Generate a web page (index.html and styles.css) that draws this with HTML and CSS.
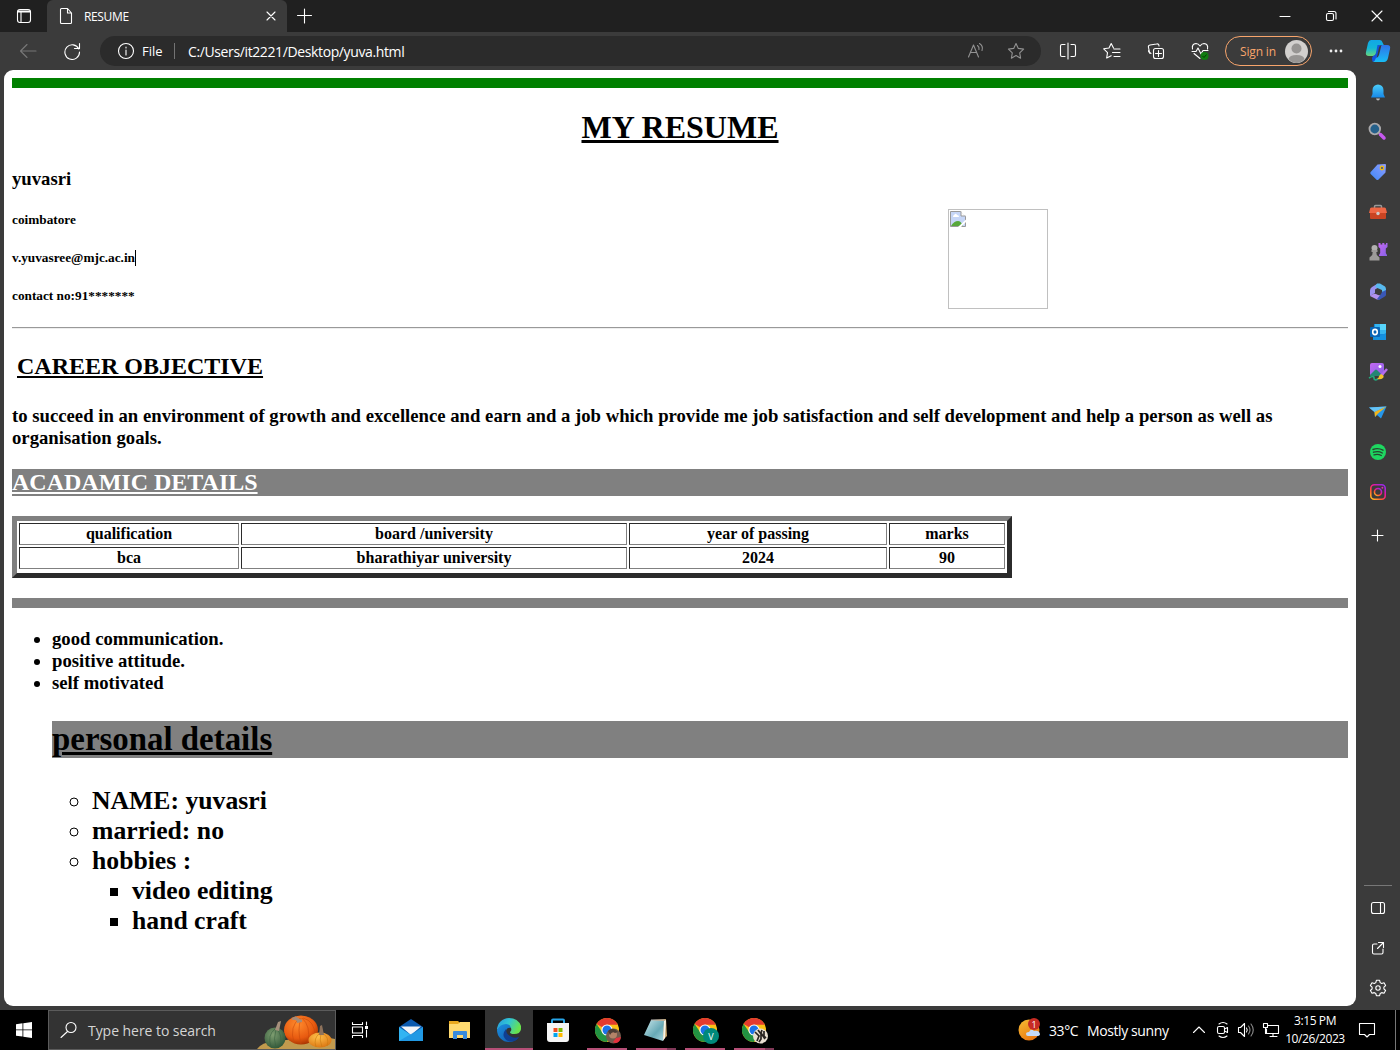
FILE: index.html
```html
<!DOCTYPE html>
<html lang="en">
<head>
<meta charset="utf-8">
<title>RESUME</title>
<link rel="stylesheet" href="styles.css">
</head>
<body>
<svg class="defs" width="0" height="0" aria-hidden="true">
  <defs>
    <linearGradient id="blue" x1="0" y1="0" x2="0" y2="1"><stop offset="0" stop-color="#4bcdf8"/><stop offset="1" stop-color="#1688e8"/></linearGradient>
    <linearGradient id="teal" x1="0" y1="0" x2="0" y2="1"><stop offset="0" stop-color="#12a6e6"/><stop offset=".5" stop-color="#12b5d8"/><stop offset="1" stop-color="#68d67c"/></linearGradient>
    <linearGradient id="sky" x1="0" y1="0" x2="0" y2="1"><stop offset="0" stop-color="#2f72e8"/><stop offset="1" stop-color="#18bdf5"/></linearGradient>
    <linearGradient id="tag" x1="0" y1="1" x2="1" y2="0"><stop offset="0" stop-color="#3f87f5"/><stop offset="1" stop-color="#8e9dff"/></linearGradient>
    <linearGradient id="purple" x1="0" y1="0" x2="1" y2="1"><stop offset="0" stop-color="#c568f2"/><stop offset="1" stop-color="#8561e6"/></linearGradient>
    <linearGradient id="insta" x1="0" y1="1" x2=".8" y2="0"><stop offset="0" stop-color="#ffca20"/><stop offset=".35" stop-color="#ff5a30"/><stop offset=".65" stop-color="#ee1694"/><stop offset="1" stop-color="#9929e8"/></linearGradient>
    <linearGradient id="edgeTop" x1="0" y1="0" x2="1" y2=".4"><stop offset="0" stop-color="#2795dd"/><stop offset=".5" stop-color="#31c5d4"/><stop offset="1" stop-color="#67e34e"/></linearGradient>
    <linearGradient id="edgeLow" x1="0" y1="0" x2="1" y2="1"><stop offset="0" stop-color="#1b8fe0"/><stop offset="1" stop-color="#1055a5"/></linearGradient>
    <radialGradient id="pumpkin" cx=".4" cy=".3" r=".75"><stop offset="0" stop-color="#ff8b2d"/><stop offset=".65" stop-color="#e85a10"/><stop offset="1" stop-color="#9f3000"/></radialGradient>
    <radialGradient id="gourd" cx=".4" cy=".35" r=".7"><stop offset="0" stop-color="#7d9d70"/><stop offset="1" stop-color="#2e5436"/></radialGradient>
    <radialGradient id="squash" cx=".4" cy=".3" r=".75"><stop offset="0" stop-color="#ffc04b"/><stop offset="1" stop-color="#db7411"/></radialGradient>
    <linearGradient id="sun" x1="0" y1="0" x2=".6" y2="1"><stop offset="0" stop-color="#f7bd33"/><stop offset="1" stop-color="#e97812"/></linearGradient>
    <linearGradient id="glass" x1="0" y1="0" x2="1" y2="1"><stop offset="0" stop-color="#c8e6ea"/><stop offset=".6" stop-color="#67a9b6"/><stop offset="1" stop-color="#a9d6de"/></linearGradient>
    <symbol id="chrome" viewBox="0 0 24 24">
      <circle cx="12" cy="12" r="12" fill="#fbc116"/>
      <path d="M12 12 1.600 6A12 12 0 0 1 22.400 6L22.800 6.800H12z" fill="#e33b2e"/>
      <path d="M1.600 6A12 12 0 0 0 12 24L16.600 14.600 12 12 7.400 14.600z" fill="#229342"/>
      <circle cx="12" cy="12" r="5.600" fill="#fff"/><circle cx="12" cy="12" r="4.500" fill="#1a73e8"/>
    </symbol>
  </defs>
</svg>
<div class="desktop">
  <div class="browser">
    <header class="tabs">
      <div class="workspace"><svg width="16" height="16" viewBox="0 0 16 16" class="line"><rect x="1.500" y="1.500" width="13" height="13" rx="2.500"/><path d="M1.500 4h13M2 3h12M5 4v10.500" /></svg></div>
      <div class="tab">
        <svg width="14" height="18" viewBox="0 0 14 18" class="line"><path d="M3 1.500h5.500L12.500 6v9.500q0 1-1 1H2.500q-1 0-1-1v-13q0-1 1-1zM8.500 1.500V6h4"/></svg>
        <span class="tab-title">RESUME</span>
        <svg width="10" height="10" viewBox="0 0 10 10" class="line"><path d="m1 1 8 8M9 1 1 9"/></svg>
      </div>
      <div class="newtab"><svg width="16" height="16" viewBox="0 0 16 16" class="line"><path d="M8.500 1v14M1.500 7.500h14"/></svg></div>
      <div class="controls">
        <svg width="46" height="32" viewBox="0 0 46 32" class="line"><path d="M18 16.500h10"/></svg>
        <svg width="46" height="32" viewBox="0 0 46 32" class="line"><rect x="18.500" y="13.500" width="7" height="7" rx="1.500"/><path d="M20.500 11.500H26q2 0 2 2V19"/></svg>
        <svg width="46" height="32" viewBox="0 0 46 32" class="line"><path d="m18 11 10 10M28 11 18 21"/></svg>
      </div>
    </header>
    <div class="toolbar">
      <svg class="back line" width="18" height="16" viewBox="0 0 18 16"><path d="M17 8H1.500M8 1.500 1.500 8 8 14.500"/></svg>
      <svg class="reload line" width="18" height="18" viewBox="0 0 18 18"><path d="M15.800 7A7.300 7.300 0 1 0 16.500 10M16.500 1.500v5h-5"/></svg>
      <div class="address">
        <svg width="18" height="18" viewBox="0 0 18 18" class="line"><circle cx="9" cy="9" r="7.500"/><path d="M9 8v5M9 5v1"/></svg>
        <span class="scheme">File</span><span class="sep"></span><span class="url">C:/Users/it2221/Desktop/yuva.html</span>
        <svg class="read line" width="18" height="18" viewBox="0 0 18 18"><path d="M1.500 15 6.500 3l5 12M3.500 10.500h6M10.500 3.500q2 1.500 1.500 4M12.500 1.500q4 2.500 2.500 7"/></svg>
        <svg class="star line" width="18" height="18" viewBox="0 0 18 18"><path d="m9 1.500 2.300 4.900 5.300.7-3.900 3.700.9 5.400L9 13.600l-4.600 2.600.9-5.400L1.400 7.100l5.300-.7z"/></svg>
      </div>
      <div class="actions">
        <svg width="44" height="18" viewBox="0 0 44 18" class="line"><path d="M19 2.500h-3q-1.500 0-1.500 1.500v9q0 1.500 1.500 1.500h3M25 2.500h3q1.500 0 1.500 1.500v9q0 1.500-1.500 1.500h-3M22 1v16"/></svg>
        <svg width="44" height="18" viewBox="0 0 44 18" class="line"><path d="m23.500 6-2.300-4.500L19 6l-5.300.8 3.800 3.800-.8 5.400 4.500-2.300M24 7h6M22.500 10.500H30M24 14.500h6"/></svg>
        <svg width="44" height="18" viewBox="0 0 44 18" class="line"><rect x="19.500" y="6.500" width="10" height="10" rx="2"/><path d="M24.500 8.500v6M21.500 11.500h6M17 11.500 15 10q-1-1 0-1.700M25 4q0-2.500-2.500-2L16 3q-2 .5-1.500 2.500l1.200 5.800"/></svg>
        <svg width="44" height="18" viewBox="0 0 44 18"><path class="line" d="M14.500 7Q13.500 2 18 1.500q2.300 0 4 2.500 1.700-2.500 4-2.500Q30.500 2 29.500 7M14 9.500h4l2-3.500 3 6 2-3.500h5M16 11.500l6 5"/><circle cx="26.500" cy="14" r="4" fill="#107c10"/><path d="m24.500 14 1.500 1.500 2.500-3" fill="none" stroke="#063d06"/></svg>
      </div>
      <div class="signin"><span>Sign in</span><svg width="23" height="23" viewBox="0 0 23 23"><circle cx="11.500" cy="11.500" r="11.500" fill="#d2d0ce"/><circle cx="11.500" cy="8.500" r="5" fill="#979593"/><path d="M3.500 19q1-4 8-4t8 4q-3.500 4-8 4t-8-4" fill="#979593"/></svg></div>
      <svg class="dots" width="16" height="4" viewBox="0 0 16 4"><g fill="#eee"><circle cx="3" cy="2" r="1.400"/><circle cx="8" cy="2" r="1.400"/><circle cx="13" cy="2" r="1.400"/></g></svg>
      <svg class="copilot" width="26" height="24" viewBox="0 0 26 24"><path d="M6 1h9q2 0 2.800 3l1 2h-3q-2 0-2.700 2l-2 7q-.7 2-3 2H4Q0 17 1 13L3 4q1-3 3-3" fill="url(#teal)"/><path d="M12.500 6h5q-3 0-3.600 3L12 18q-1 4-4 5-1-1-1-4l1-2q2 0 3-3z" fill="#1354dc"/><path d="M17 6h5q4 0 3 4l-2 9q-1 4-4 4H8q2-1 3-4 2 0 3-3l2-8q0-2 1-2" fill="url(#sky)"/></svg>
    </div>
    <div class="content">
      <main class="page">
        <div class="green-bar"></div>
        <h1 class="title">MY RESUME</h1>
        <h3 class="name">yuvasri</h3>
        <div class="contact">
          <div class="contact-lines">
            <h5>coimbatore</h5>
            <h5 class="email">v.yuvasree@mjc.ac.in<i class="caret"></i></h5>
            <h5>contact no:91*******</h5>
          </div>
          <div class="photo"><svg width="16" height="16" viewBox="0 0 16 16"><path d="M.5.500h10l5 5v10H.500z" fill="#c6d6f7" stroke="#999"/><path d="M3 6h6q0-2-2-2-1-2-2.500-.5Q3 4 3 6" fill="#fff"/><path d="M1 15q3-5 7-5 3 0 5 5z" fill="#58a83b"/><path d="M11 .5v4.500h4.500" fill="#fff" stroke="#999"/><path d="m8 16 8-7.500V11l-5 5z" fill="#fff"/></svg></div>
        </div>
        <hr class="rule">
        <h2 class="objective-title">CAREER OBJECTIVE</h2>
        <p class="objective">to succeed in an environment of growth and excellence and earn and a job which provide me job satisfaction and self development and help a person as well as organisation goals.</p>
        <h2 class="academic-title">ACADAMIC DETAILS</h2>
        <div class="table-frame">
          <table>
            <colgroup><col class="c1"><col class="c2"><col class="c3"><col class="c4"></colgroup>
            <tr><th>qualification</th><th>board /university</th><th>year of passing</th><th>marks</th></tr>
            <tr><th>bca</th><th>bharathiyar university</th><th>2024</th><th>90</th></tr>
          </table>
        </div>
        <div class="gray-bar"></div>
        <ul class="skills"><li>good communication.</li><li>positive attitude.</li><li>self motivated</li></ul>
        <section class="personal">
          <h1>personal details</h1>
          <ul class="facts">
            <li>NAME: yuvasri</li><li>married: no</li>
            <li>hobbies :<ul><li>video editing</li><li>hand craft</li></ul></li>
          </ul>
        </section>
      </main>
      <aside class="sidebar">
        <div class="slot"><svg width="20" height="20" viewBox="0 0 20 20"><path d="M3 15.500 4.500 12V8a5.500 5.500 0 0 1 11 0v4l1.500 3.500z" fill="url(#blue)"/><path d="M8 16.500h4q-.5 2-2 2t-2-2" fill="#bbb"/></svg></div>
        <div class="slot"><svg width="20" height="20" viewBox="0 0 20 20"><path d="m11 11 2 2" stroke="#aaa" stroke-width="2"/><path d="m12.500 12.500 3.500 3.500" stroke="#c658ef" stroke-width="3.500" stroke-linecap="round"/><circle cx="6.800" cy="7" r="5.300" fill="#25608a" stroke="#aaa9ab" stroke-width="1.800"/></svg></div>
        <div class="slot"><svg width="20" height="20" viewBox="0 0 20 20"><path d="M9.500 2.500 17 2q1 0 1 1l-.5 7.500-7 7q-1 1-2.200 0l-5.600-5.500q-1-1 0-2z" fill="url(#tag)"/><circle cx="14" cy="6" r="1.700" fill="#334b8f" stroke="#e9b91b" stroke-width="1.400"/></svg></div>
        <div class="slot"><svg width="20" height="20" viewBox="0 0 20 20"><path d="M6.500 6V4.500q0-1 1-1h5q1 0 1 1V6" fill="none" stroke="#999" stroke-width="1.500"/><path d="M2 7q0-1.500 1.500-1.500h13Q18 5.500 18 7l1 4H1z" fill="#ee6745"/><path d="M2 11h16v5q0 1-1 1H3q-1 0-1-1z" fill="#c94423"/><circle cx="10" cy="11.500" r="1.700" fill="#ccc"/></svg></div>
        <div class="slot"><svg width="20" height="20" viewBox="0 0 20 20"><path d="M10.500 1h2v1.500h1.800V1h2v1.500H18V1h1.500v4L17.800 6.500V11l1.200 2v1h-8v-1l1.200-2V6.500L10.500 5z" fill="url(#purple)"/><circle cx="6.500" cy="6" r="3" fill="#b1b0ae"/><path d="M3.500 8h6v2H8.300l.5 3 2.700 2.500V18.500h-10v-3L4.200 13l.5-3H3.500z" fill="#9d9c9a"/></svg></div>
        <div class="slot"><svg width="20" height="20" viewBox="0 0 20 20"><path d="M9 2 4 5Q2 6 2 8.500V14l5-3V7.500L13 4z" fill="#9b91ef"/><path d="M9 1.500h3L17 4.500q1 1 1 3V13l-4-3.500V8L7 5z" fill="#58b9ee"/><path d="M2 14q4-3 6-2l2 1 6 1-5 3.500H9z" fill="#b391ee"/><path d="M18 8v5q0 1-2 2l-5 3-2-1 4-5 1-2z" fill="#3957b5"/></svg></div>
        <div class="slot"><svg width="20" height="20" viewBox="0 0 20 20"><path d="M6 2h12v15H5z" fill="#1688da"/><path d="M7 2h5v6H7zM12 8h6v4h-6z" fill="#36b5ef"/><path d="M12 2h6v6h-6z" fill="#57d5fb"/><path d="m5 11 7 3 6-3v7H5z" fill="#1490df"/><rect x="2" y="5" width="10" height="10" rx="1" fill="#0765b6"/><ellipse cx="7" cy="10" rx="2.300" ry="2.600" fill="none" stroke="#fff" stroke-width="1.600"/></svg></div>
        <div class="slot"><svg width="20" height="20" viewBox="0 0 20 20"><rect x="2" y="1" width="14" height="13" rx="2" fill="url(#purple)"/><circle cx="12" cy="4.500" r="1.500" fill="#fff"/><path d="m2 13 5-5q1-1 2 0l6 6H2z" fill="#248673"/><path d="M1 16q5-3 5 0t4 1" fill="none" stroke="#25a67b" stroke-width="1.700"/><path d="m13 14 6-7" stroke="#b76bed" stroke-width="2.500"/><path d="M13 12q4 2 2 4-2 2-6 1 2-1 2-3z" fill="#f2c32c"/></svg></div>
        <div class="slot"><svg width="20" height="20" viewBox="0 0 20 20"><path d="m1 5.500 17.500-1L13 16.500 9 13l-2 2-.5-5z" fill="#2596ea"/><path d="m1 5.500 17.500-1L6.500 10z" fill="#65c3f6"/><path d="M18.500 4.500 6.500 10 7 15l2.500-3z" fill="#f2b51b"/></svg></div>
        <div class="slot"><svg width="20" height="20" viewBox="0 0 20 20"><circle cx="10" cy="10" r="8" fill="#1ed760"/><path d="M5 7.500q5-2 10 .7M5.500 10.200q5-1.500 8.800.8M6 12.900q4-1.200 7.300.6" fill="none" stroke="#264530" stroke-width="1.400" stroke-linecap="round"/></svg></div>
        <div class="slot"><svg width="20" height="20" viewBox="0 0 20 20"><g fill="none" stroke="url(#insta)" stroke-width="1.600"><rect x="2.800" y="2.800" width="14.400" height="14.400" rx="3.500"/><circle cx="10" cy="10" r="3.500"/></g><circle cx="14.400" cy="5.700" r="1" fill="#e527b0"/></svg></div>
        <div class="slot add"><svg width="16" height="16" viewBox="0 0 16 16" class="line"><path d="M7.500 2v11M2 7.500h11"/></svg></div>
        <div class="side-bottom">
          <div class="slot"><svg width="16" height="16" viewBox="0 0 16 16" class="line"><rect x="1.500" y="2.500" width="13" height="11" rx="2"/><path d="M10.500 2.500v11"/></svg></div>
          <div class="slot"><svg width="16" height="16" viewBox="0 0 16 16" class="line"><path d="M7 4H4Q2.500 4 2.500 5.500v7Q2.500 14 4 14h7.500q1.500 0 1.500-1.500V9M8.500 2.500h5v5M13.500 2.500l-6 6"/></svg></div>
          <div class="slot"><svg width="18" height="18" viewBox="0 0 18 18" class="line"><path d="M7.400 1.300h3.200l.6 2.300 1.500.9 2.300-.7 1.600 2.800-1.700 1.600v1.700l1.700 1.600-1.600 2.800-2.300-.7-1.500.9-.6 2.200H7.400l-.6-2.200-1.500-.9-2.300.7-1.600-2.800 1.700-1.600V8.200L1.400 6.600 3 3.800l2.300.7 1.500-.9z"/><circle cx="9" cy="9" r="2.200"/></svg></div>
        </div>
      </aside>
    </div>
  </div>
  <footer class="taskbar">
    <div class="start"><svg width="16" height="16" viewBox="0 0 16 16"><path d="m0 2.200 6.500-.9v6.200H0zM7.300 1.200 16 0v7.500H7.300zM0 8.300h6.500v6.300L0 13.700zM7.300 8.300H16V16l-8.700-1.300z" fill="#fff"/></svg></div>
    <div class="search">
      <svg width="18" height="18" viewBox="0 0 18 18" class="line"><circle cx="11" cy="6.500" r="5"/><path d="m7.500 10.500-6.500 6"/></svg>
      <span>Type here to search</span>
      <svg class="pumpkins" width="78" height="38" viewBox="0 0 78 38">
        <path d="M0 38q6-8 18-7 20-4 34-3 16-3 26 0v10z" fill="#c29a4d"/>
        <ellipse cx="44" cy="19" rx="17" ry="14.500" fill="url(#pumpkin)"/>
        <path d="M43 7q-11 8-6 25M44 7q-4 12 0 26M45 7q9 8 6 24M46 7q12 3 12 18" fill="none" stroke="#c94a0c" stroke-width=".6"/>
        <path d="M35 7q4-3 6 0l4 2v2l-5 1q0-4-5-3z" fill="#a58b78"/>
        <ellipse cx="18" cy="27" rx="10.500" ry="10.500" fill="url(#gourd)"/>
        <path d="M18 18q-8 6-4 18M19 18q-3 10 0 19M20 18q6 7 3 18" fill="none" stroke="#395f40" stroke-width=".6"/>
        <path d="m18 19 3-8 3-1-2 10z" fill="#a6907c"/>
        <ellipse cx="63" cy="29" rx="11.500" ry="7.500" fill="url(#squash)"/>
        <path d="M63 22q-7 5-4 14M64 22q-2 7 1 14M65 22q8 4 5 13" fill="none" stroke="#c7780f" stroke-width=".6"/>
        <path d="m62 24 1-9 2-1 2 10z" fill="#8e725b"/>
      </svg>
    </div>
    <div class="apps">
      <div class="app taskview"><svg width="18" height="18" viewBox="0 0 18 18" class="line"><path d="M1.500 1.500v2h10v-2M1.500 16.500v-2h10v2M15.500 1v3M15.500 9v7M1.500 6h10v6h-10z"/><path d="M14 5h3v3h-3z" fill="#fff" stroke="none"/></svg></div>
      <div class="app"><svg width="24" height="24" viewBox="0 0 24 24"><path d="M0 9 12 1l12 8v14H0z" fill="#0b5aaf"/><path d="M2 8.500h20L12 17z" fill="#f4f6f9"/><path d="m0 9 12 8 12-8v14H0z" fill="#32b4f2"/><path d="M0 23 24 9v14z" fill="#198bdc" opacity=".65"/></svg></div>
      <div class="app"><svg width="24" height="24" viewBox="0 0 24 24"><path d="M1 3h9l2 2h10v15H1z" fill="#e9a91f"/><path d="M1 6h9l2-2h10v16H1z" fill="#ffda70"/><path d="M5 14q0-1 1-1h12q1 0 1 1v7h-4v-4H9v4H5z" fill="#398bdb"/></svg></div>
      <div class="app active full"><svg width="24" height="24" viewBox="0 0 24 24"><path d="M0 12A12 12 0 0 1 12 0q9 0 12 8 1 8-7 8-4 0-4-2 2-1 1-4-1-2-4-2-6 0-10 4" fill="url(#edgeTop)"/><path d="M0 12q3-6 9-6 4 0 5 4-4-1-5 3-1 7 6 8 4 1 7-2-4 5-10 5A12 12 0 0 1 0 12" fill="url(#edgeLow)"/><path d="M9 11q-6 7 2 12 7 2 11-4-5 2-9-1-4-2-4-7" fill="#103f91"/></svg></div>
      <div class="app"><svg width="24" height="24" viewBox="0 0 24 24"><path d="M6 8V2.500q0-1 1-1h10q1 0 1 1V8" fill="none" stroke="#27a5e8" stroke-width="2"/><path d="M1 5h22v16q0 3-3 3H4q-3 0-3-3z" fill="#f5f5f5"/><path d="M7.500 10h4v4h-4z" fill="#f25022"/><path d="M12.500 10h4v4h-4z" fill="#7fba00"/><path d="M7.500 15h4v4h-4z" fill="#00a4ef"/><path d="M12.500 15h4v4h-4z" fill="#ffb900"/></svg></div>
      <div class="app running"><svg width="24" height="26" viewBox="0 0 24 26"><use href="#chrome" y="1" width="24" height="24"/><circle cx="18.500" cy="19" r="7.500" fill="#715b4d"/><circle cx="18" cy="17.500" r="4" fill="#b48368"/><path d="M13 14q5-5 10 1l-3 1q-3-2-5 2z" fill="#4b3c34"/><path d="m18 25 3-4 5-1q-1 6-6 6z" fill="#e4313d"/></svg></div>
      <div class="app running multi"><svg width="24" height="24" viewBox="0 0 24 24"><path d="m8 2 14-1 1 17-4 4z" fill="#c8a368"/><path d="m7 2 13 1-1 20L0 17z" fill="url(#glass)"/><path d="m20 3 2-1-1 18-2 3z" fill="#f4f3e8"/><path d="M7 2h14" stroke="#bbb"/></svg></div>
      <div class="app running"><svg width="24" height="26" viewBox="0 0 24 26"><use href="#chrome" y="1" width="24" height="24"/><circle cx="18" cy="19" r="8" fill="#00897b"/><text x="18" y="22.500" class="avatar-letter">V</text></svg></div>
      <div class="app running multi"><svg width="24" height="26" viewBox="0 0 24 26"><use href="#chrome" y="1" width="24" height="24"/><circle cx="18.500" cy="19" r="7.500" fill="#e9dfd2"/><path d="m13 15 4 4-2 5M16 13l3 4v5l-2 3M20 13l-1 3 4 6M22 14v5l2 2" fill="none" stroke="#292421" stroke-width="1.700"/></svg></div>
    </div>
    <div class="weather">
      <svg width="24" height="24" viewBox="0 0 24 24"><circle cx="11" cy="12" r="10.500" fill="url(#sun)"/><path d="M10 18q-2 0-2-2t3-2q2-4 5-1 5-1 6 3 0 2-3 2z" fill="#c5daf7"/><circle cx="16" cy="6" r="6" fill="#c72b23"/><text x="16" y="9.500" class="badge-number">1</text></svg>
      <span class="temp">33°C</span><span class="forecast">Mostly sunny</span>
    </div>
    <div class="tray">
      <svg width="14" height="16" viewBox="0 0 14 16" class="line"><path d="m1.500 10.500 5.500-5.500 5.500 5.500"/></svg>
      <svg class="meet line" width="16" height="18" viewBox="0 0 16 18"><path d="M4 3q4-3 8 0M4 15q4 3 8 0"/><rect x="2.500" y="5.500" width="7" height="7" rx="1.500"/><path d="m9.500 8 3-1.500v5l-3-1.500"/></svg>
      <svg width="18" height="16" viewBox="0 0 18 16" class="line"><path d="M1.500 5.500h2l4-4v13l-4-4h-2zM9.500 6q1.500 2 0 4"/><path d="M11.500 4q3 4 0 8M14 2q4.500 6 0 12" opacity=".55"/></svg>
      <svg width="18" height="16" viewBox="0 0 18 16" class="line"><path d="M5.500 3.500h11v8h-12V7M8 14.500h7M11 12v2M1.500 1.500h4v4h-4zM3.500 5.500v6"/></svg>
    </div>
    <div class="clock"><span class="time">3:15 PM</span><span class="date">10/26/2023</span></div>
    <svg class="notice line" width="18" height="18" viewBox="0 0 18 18"><path d="M1.500 2.500h15v11h-5L9 16l-2.500-2.500h-5z"/></svg>
    <div class="peek"></div>
  </footer>
</div>
</body>
</html>
```
FILE: styles.css
```css
* { box-sizing: border-box; }
body { margin: 0; overflow: hidden; font-family: "Open Sans", "Noto Sans", sans-serif; color: #fff; }
svg { flex: none; display: block; }
.defs { position: absolute; }
.line { fill: none; stroke: currentColor; stroke-width: 1.1; stroke-linecap: round; stroke-linejoin: round; }
.desktop { width: 1400px; height: 1050px; display: flex; flex-direction: column; background: #000; }
.browser { height: 1010px; background: #3b3b3b; display: flex; flex-direction: column; }
span { white-space: nowrap; }

.tabs { height: 32px; background: #202020; display: flex; align-items: center; }
.workspace { width: 47px; padding-left: 16px; }
.tab { width: 240px; height: 32px; background: #3b3b3b; border-radius: 6px 6px 0 0; padding: 0 11px 0 12px; display: flex; align-items: center; }
.tab-title { margin-left: 11px; flex: 1; font-size: 12px; letter-spacing: -.35px; }
.newtab { padding-left: 9px; }
.controls { margin-left: auto; display: flex; }

.toolbar { height: 38px; display: flex; align-items: center; }
.back { margin-left: 19px; color: #777; }
.reload { margin-left: 26px; }
.address { flex: none; margin-left: 19px; width: 941px; height: 30px; border-radius: 15px; background: #2b2b2b; display: flex; align-items: center; padding: 0 16px 0 17px; font-size: 13px; }
.scheme { width: 32px; margin-left: 7px; }
.sep { width: 1px; height: 16px; background: #737373; }
.url { margin-left: 13px; flex: 1; font-size: 14px; letter-spacing: -.38px; }
.read, .star { color: #929292; }
.star { margin-left: 22px; }
.actions { display: flex; margin-left: 5px; }
.signin { margin-left: 3px; width: 87px; height: 30px; border: 1px solid #f8a56c; border-radius: 15px; display: flex; align-items: center; justify-content: space-between; padding: 0 3px 0 14px; color: #f8a56c; font-size: 12px; }
.signin span { letter-spacing: -.15px; }
.dots { margin-left: 16px; }
.copilot { margin-left: 21px; }

.content { flex: 1; display: flex; min-height: 0; }
.page { margin-left: 4px; width: 1352px; height: 936px; background: #fff; border-radius: 9px; padding: 8px; color: #000; font-family: "Liberation Serif", serif; font-weight: bold; }
.page h1, .page h2, .page h3, .page h5, .page p, .page ul { margin: 0; }
.page h1, .page h2 { text-decoration: underline; }
.green-bar { height: 10px; background: #008000; }
.page .title { margin-top: 21px; text-align: center; font-size: 32px; line-height: 37px; }
.page .name { margin-top: 22px; font-size: 18.72px; line-height: 22px; }
.contact { display: flex; height: 137px; }
.contact-lines { width: 936px; padding-top: 22px; display: flex; flex-direction: column; gap: 22px; }
.contact h5 { font-size: 13.28px; line-height: 16px; }
.email { display: flex; }
.caret { width: 1px; height: 16px; background: #000; }
.photo { margin-top: 19px; width: 100px; height: 100px; border: 1px solid #c0c0c0; padding: 1px; }
.rule { margin: 0; height: 2px; border: 0; border-top: 1px solid #999; border-bottom: 1px solid #eee; }
.page .objective-title { margin: 24px 0 0 5px; font-size: 24px; line-height: 27px; }
.page .objective { margin-top: 25px; font-size: 18.72px; line-height: 22px; }
.page .academic-title { margin-top: 20px; font-size: 24px; line-height: 27px; background: #808080; color: #fff; }
.table-frame { width: 1000px; height: 62px; margin-top: 20px; border: 5px solid; border-color: #808080 #2b2b2b #2b2b2b #808080; }
table { width: 990px; table-layout: fixed; border-spacing: 2px; font-size: 16px; line-height: 18px; }
.c1 { width: 220px; } .c2 { width: 386px; } .c3 { width: 258px; } .c4 { width: 116px; }
th { padding: 1px; border: 1px solid; border-color: #2b2b2b #808080 #808080 #2b2b2b; }
.gray-bar { margin-top: 20px; height: 10px; background: #808080; }
.page .skills { margin-top: 20px; padding-left: 40px; font-size: 18.72px; line-height: 22px; }
.personal { margin: 27px 0 0 40px; }
.personal h1 { font-size: 32.9px; line-height: 37px; background: #808080; }
.page .facts { margin-top: 28px; padding-left: 40px; font-size: 25.7px; line-height: 30px; list-style: circle; }
.facts ul { padding-left: 40px; list-style: square; }

.sidebar { width: 44px; padding-top: 2px; display: flex; flex-direction: column; }
.slot { height: 40px; flex: none; display: flex; align-items: center; justify-content: center; }
.add { margin-top: 4px; }
.side-bottom { margin: auto 8px 2px; border-top: 1px solid #777; padding-top: 2px; }

.taskbar { height: 40px; display: flex; align-items: center; font-size: 14px; }
.start { width: 48px; display: flex; justify-content: center; }
.search { width: 288px; height: 40px; border: 1px solid #5b5b5b; background: #333; display: flex; align-items: center; padding-left: 11px; color: #d5d5d5; }
.search .line { color: #fff; }
.search span { margin-left: 10px; flex: 1; letter-spacing: -.05px; }
.pumpkins { align-self: flex-end; }
.apps { display: flex; gap: 1px; }
.app { width: 48px; height: 40px; display: flex; align-items: center; justify-content: center; }
.taskview { margin-right: 2px; }
.active { background: #333; }
.full { border-bottom: 2px solid #b54f77; padding-top: 2px; }
.running { background: linear-gradient(#b54f77, #b54f77) center bottom / 40px 2px no-repeat; }
.running svg { overflow: visible; }
.multi { background: linear-gradient(90deg, #b54f77 31px, #803858 31px) center bottom / 40px 2px no-repeat; }
.avatar-letter { font: 9px "Open Sans", sans-serif; fill: #fff; text-anchor: middle; }
.badge-number { font: 9px "Open Sans", sans-serif; fill: #fff; text-anchor: middle; }
.weather { margin-left: 240px; display: flex; align-items: center; }
.temp { margin-left: 7px; width: 38px; letter-spacing: -.4px; }
.forecast { width: 83px; letter-spacing: -.4px; }
.tray { margin-left: 22px; display: flex; align-items: center; gap: 7px; }
.meet { margin: 0 -1px 0 2px; }
.clock { margin-left: 2px; width: 66px; height: 40px; display: flex; flex-direction: column; align-items: center; font-size: 12px; line-height: 18px; padding-top: 2px; letter-spacing: -.4px; }
.notice { margin-left: 10px; }
.peek { margin-left: auto; margin-right: 4px; width: 1px; height: 40px; background: #777; }
```
